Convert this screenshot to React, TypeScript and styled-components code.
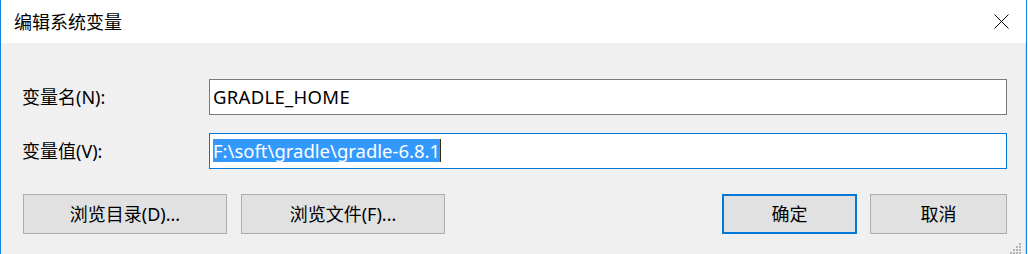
import { FC } from 'react';
import styled, { createGlobalStyle } from 'styled-components';

const GlobalStyle = createGlobalStyle`
  html, body {
    margin: 0;
    padding: 0;
    background: #ffffff;
  }
  body {
    font-family: "Noto Sans", "Noto Sans CJK SC", sans-serif;
  }
`;

const Window = styled.div`
  box-sizing: border-box;
  width: 1027px;
  height: 254px;
  border-left: 1px solid #1883d7;
  border-right: 1px solid #1883d7;
  display: flex;
  flex-direction: column;
  background: #f0f0f0;
  overflow: hidden;
`;

const TitleBar = styled.div`
  height: 43px;
  flex: 0 0 auto;
  background: #ffffff;
  display: flex;
  align-items: center;
  justify-content: space-between;
  padding: 0 17px 0 13px;
`;

const Title = styled.span`
  font-size: 18px;
  color: #000000;
  line-height: 1;
`;

const CloseButton = styled.div`
  width: 15px;
  height: 15px;
  display: flex;
`;

const Body = styled.div`
  position: relative;
  flex: 1 1 auto;
  display: flex;
  flex-direction: column;
  padding: 36px 18px 0 21px;
  border-right: 1px solid #dadada;
`;

const FieldRow = styled.div<{ $gap?: number }>`
  display: flex;
  align-items: center;
  margin-bottom: ${(p) => p.$gap ?? 0}px;
`;

const Label = styled.label`
  width: 187px;
  font-size: 18px;
  color: #000000;
  line-height: 1;
`;

const TextBox = styled.div<{ $focused?: boolean }>`
  box-sizing: border-box;
  flex: 1 1 auto;
  height: 36px;
  background: #ffffff;
  border: 1px solid ${(p) => (p.$focused ? '#0078d7' : '#7a7a7a')};
  padding: 0 3px;
  display: flex;
  align-items: center;
  font-size: 18.5px;
  color: #000000;
  white-space: nowrap;
`;

const BoxText = styled.span`
  line-height: 23px;
  margin-top: -2px;
  letter-spacing: 0.3px;
`;

const Selection = styled.span`
  background: #3399ff;
  color: #ffffff;
  line-height: 23px;
  margin-top: -2px;
  border-right: 1px solid #3a2a10;
`;

const ButtonRow = styled.div`
  display: flex;
  justify-content: space-between;
  margin-top: 25px;
  padding-left: 1px;
`;

const ButtonGroup = styled.div<{ $gap: number }>`
  display: flex;
  gap: ${(p) => p.$gap}px;
`;

const Button = styled.button<{ $width: number; $default?: boolean }>`
  box-sizing: border-box;
  width: ${(p) => p.$width}px;
  height: 40px;
  margin: 0;
  padding: 0;
  background: #e1e1e1;
  border: ${(p) => (p.$default ? '2px solid #0078d7' : '1px solid #adadad')};
  font-family: "Noto Sans", "Noto Sans CJK SC", sans-serif;
  font-size: 18px;
  color: #000000;
  line-height: 1;
`;

const Grip = styled.svg`
  position: absolute;
  right: 3px;
  bottom: 0;
`;

const App: FC = () => {
  return (
    <Window>
      <GlobalStyle />
      <TitleBar>
        <Title>编辑系统变量</Title>
        <CloseButton>
          <svg width="15" height="15" viewBox="0 0 15 15">
            <path d="M0.5 0.5 L14.5 14.5 M14.5 0.5 L0.5 14.5" stroke="#000" strokeWidth="1" fill="none" />
          </svg>
        </CloseButton>
      </TitleBar>
      <Body>
        <FieldRow $gap={18}>
          <Label>变量名(N):</Label>
          <TextBox>
            <BoxText>GRADLE_HOME</BoxText>
          </TextBox>
        </FieldRow>
        <FieldRow>
          <Label>变量值(V):</Label>
          <TextBox $focused>
            <Selection>F:\soft\gradle\gradle-6.8.1</Selection>
          </TextBox>
        </FieldRow>
        <ButtonRow>
          <ButtonGroup $gap={14}>
            <Button $width={204}>浏览目录(D)...</Button>
            <Button $width={204}>浏览文件(F)...</Button>
          </ButtonGroup>
          <ButtonGroup $gap={13}>
            <Button $width={135} $default>确定</Button>
            <Button $width={137}>取消</Button>
          </ButtonGroup>
        </ButtonRow>
        <Grip width="12" height="11" viewBox="0 0 12 11">
          <g fill="#b4b4b4">
            <rect x="9" y="0" width="2" height="2" />
            <rect x="6" y="3" width="2" height="2" />
            <rect x="9" y="3" width="2" height="2" />
            <rect x="3" y="6" width="2" height="2" />
            <rect x="6" y="6" width="2" height="2" />
            <rect x="9" y="6" width="2" height="2" />
            <rect x="0" y="9" width="2" height="2" />
            <rect x="3" y="9" width="2" height="2" />
            <rect x="6" y="9" width="2" height="2" />
            <rect x="9" y="9" width="2" height="2" />
          </g>
        </Grip>
      </Body>
    </Window>
  );
};

export default App;
